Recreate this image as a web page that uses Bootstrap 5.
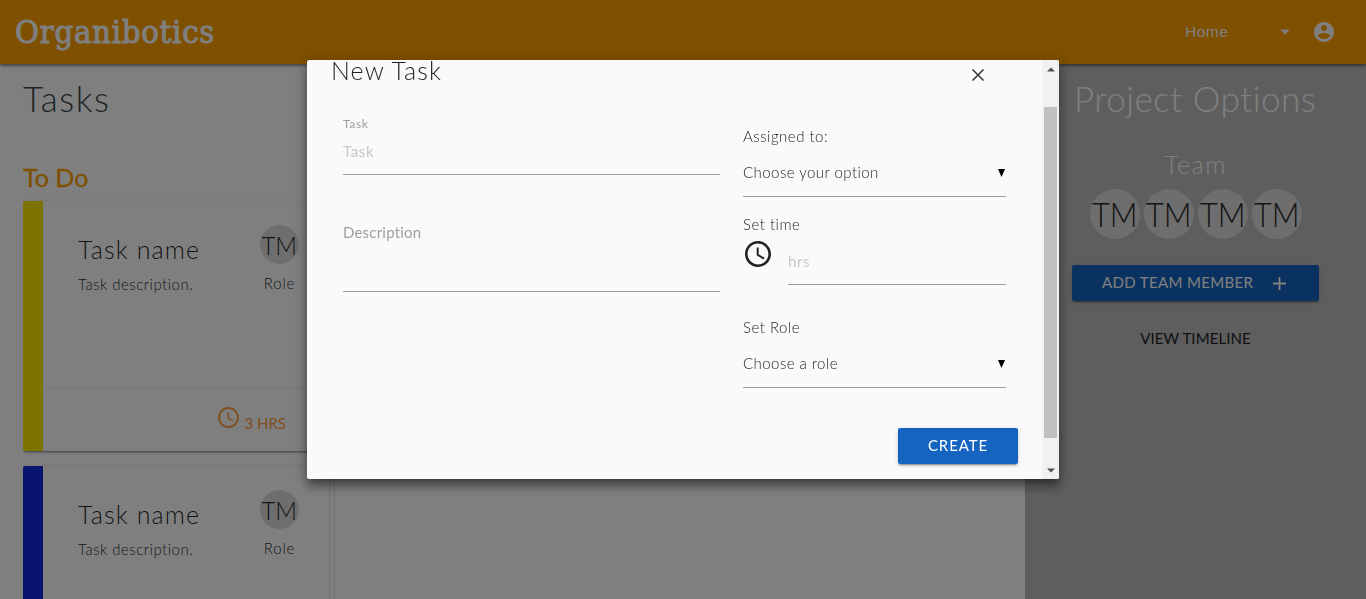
<!DOCTYPE html>
<html lang="en">
<head>
<meta charset="utf-8">
<title>Organibotics</title>
<meta name="viewport" content="width=device-width, initial-scale=1">
<link href="https://cdn.jsdelivr.net/npm/bootstrap@5.3.0/dist/css/bootstrap.min.css" rel="stylesheet">
<style>
body{font-family:Lato,"Open Sans",sans-serif;font-size:15px;font-weight:300;color:rgba(0,0,0,.87);height:100vh;overflow:hidden;background:#fff}
h1,h2,h3,p,label{margin:0;font-weight:300;white-space:nowrap}
.topbar{height:64px;background:#ffa000;box-shadow:0 2px 2px rgba(0,0,0,.3),0 1px 5px rgba(0,0,0,.25);position:relative;padding:0 30px 0 15px}
.brand{font:400 32.500px/64px "DejaVu Serif Condensed","DejaVu Serif",serif;font-stretch:condensed;color:#fff;letter-spacing:.75px;-webkit-text-stroke:1px #fff}
.home{font:15.5px/64px "Liberation Sans",sans-serif;color:#fff;width:94px;letter-spacing:.5px}
.account{margin-left:-3px}
.board{height:535px}
.tasks{width:1025px;padding-left:23px}
.page-title{font-size:35px;line-height:40px;padding-top:14px;letter-spacing:1.600px;color:#37474f}
.lane{width:312px;border-right:1px solid #e4e4e4;margin-top:44px;height:437px;overflow:hidden}
.lane-title{font-size:25px;line-height:30px;font-weight:400;color:#ffa000;letter-spacing:0;-webkit-text-stroke:.3px #ffa000}
.task{height:250px;margin:9px 5px 15px 0;background:#fff;border-radius:2px;box-shadow:0 2px 2px 0 rgba(0,0,0,.14),0 1px 5px 0 rgba(0,0,0,.12),0 3px 1px -2px rgba(0,0,0,.2);overflow:hidden}
.task-cut{height:134px;margin-bottom:0;border-radius:2px 2px 0 0}
.stripe{width:20px}
.yellow{background:#ffe600}.blue{background:#1028dc}
.task-main{height:187px;padding:24px 30px 0 35px}
.task-name{font-size:25px;line-height:30px;padding-top:9px;letter-spacing:1.150px}
.task-desc{line-height:22px;padding-top:9px;letter-spacing:.5px}
.who{width:39px}
.role{line-height:22px;padding-top:8px;letter-spacing:.8px}
.task-foot{border-top:1px solid #ededed;padding:18px 43px 0 0;height:63px;color:#ffa040}
.hours{line-height:20px;margin:6px 0 0 5px;font-weight:400}
.side{width:341px;background:#bdbdbd;color:#fff}
.side-title{font-size:35px;line-height:40px;padding:14px 0 0 49px;letter-spacing:.5px}
.team-title{font-size:25px;line-height:30px;margin-top:31px;letter-spacing:1.500px}
.team{gap:4px;margin-top:10px}
.blue-btn{background:#1565c0;color:#fff;border-radius:2px;height:36px;font-size:15px;font-weight:400;box-shadow:0 2px 2px rgba(0,0,0,.14),0 1px 5px rgba(0,0,0,.12),0 3px 1px -2px rgba(0,0,0,.2);white-space:nowrap;border:0;padding:0 0 2px}
.add{width:247px;margin:26px 0 0 47px;padding:0 33px 0 30px;letter-spacing:.35px}
.add span{padding-bottom:2px}
.create{width:120px;margin:40px 24px 0 auto;letter-spacing:.9px}
.timeline{font-weight:400;line-height:22px;margin:26px 0 0;letter-spacing:.1px;color:#212121}
.shade{--bs-backdrop-bg:#000;--bs-backdrop-opacity:.5}
.modal{overflow:hidden}
.modal-dialog{max-width:752px;margin:60px auto 0}
.modal-content{height:419px;background:#fafafa;border:0;border-radius:2px;flex-direction:row;overflow:hidden;box-shadow:0 8px 10px 1px rgba(0,0,0,.24),0 3px 14px 2px rgba(0,0,0,.22),0 5px 5px -3px rgba(0,0,0,.3);color:rgba(0,0,0,.87)}
.sheet{width:735px}
.sheet-head{height:41px}
.new-title{font-size:25px;line-height:20px;margin-left:24px;letter-spacing:1.100px}
.close-x{margin:9px 58px 0 0}
.left-col{width:377px;margin-left:36px}
.right-col{width:263px;margin-left:23px;padding-top:24px}
.small-label{font-size:12px;line-height:16px;padding-top:15px;height:29px;color:#9e9e9e;font-weight:400;letter-spacing:.6px}
.line-input{border:0;border-bottom:1px solid #9e9e9e;border-radius:0;background:none;padding:0 0 2px;font-size:15px;font-weight:300;height:45px;display:block;outline:0;width:100%;box-shadow:none;letter-spacing:.6px}
.line-input::placeholder{color:#c8c8c8;opacity:1;font-weight:400}
.desc{height:117px;border-bottom:1px solid #9e9e9e;color:#9e9e9e;line-height:22px;padding-top:46px;letter-spacing:.2px;font-weight:400}
.field-label{line-height:22px;letter-spacing:.5px}
.time-label{margin-top:16px}
.role-label{margin-top:31px}
.time-row{padding-top:5px}
.picker{height:50px;border-bottom:1px solid #9e9e9e;letter-spacing:.45px;padding-top:2px}
.clock-lg{margin:1px 17px 0 2px;flex:none}
.bar-v{width:17px;background:#f1f1f1;padding:7px 2px 6px}
.thumb{height:331px;background:#c1c1c1;width:13px;margin-top:35px}
</style>
</head>
<body>
<nav class="topbar d-flex align-items-center">
  <span class="brand me-auto">Organibotics</span>
  <span class="home">Home</span>
  <svg width="12" height="6" class="me-4" viewBox="0 0 12 6"><path d="M1 .5h10l-5 5z" fill="#fff"/></svg>
  <svg class="account" width="24" height="24" viewBox="0 0 24 24"><path fill="#fff" d="M12 2C6.480 2 2 6.480 2 12s4.480 10 10 10 10-4.480 10-10S17.520 2 12 2zm0 3c1.660 0 3 1.340 3 3s-1.340 3-3 3-3-1.340-3-3 1.340-3 3-3zm0 14.200c-2.500 0-4.710-1.280-6-3.220.030-1.990 4-3.080 6-3.080 1.990 0 5.970 1.090 6 3.080-1.290 1.940-3.500 3.220-6 3.220z"/></svg>
</nav>
<svg width="0" height="0" class="d-none"><defs>
  <symbol id="tm" viewBox="0 0 50 50"><circle cx="25" cy="25" r="25" fill="#dcdcdc"/><text x="2" y="38" font-family="Lato" font-weight="300" font-size="33.500" textLength="45.500" lengthAdjust="spacingAndGlyphs" fill="#2a2a2a">TM</text></symbol>
  <symbol id="clock" viewBox="2 2 20 20"><path fill="currentColor" d="M11.990 2C6.470 2 2 6.480 2 12s4.470 10 9.990 10C17.520 22 22 17.520 22 12S17.520 2 11.990 2zM12 20c-4.420 0-8-3.580-8-8s3.580-8 8-8 8 3.580 8 8-3.580 8-8 8zm.5-13H11v6l5.250 3.150.750-1.230-4.500-2.670z"/></symbol>
</defs></svg>
<div class="board d-flex">
  <main class="tasks">
    <h1 class="page-title">Tasks</h1>
    <section class="lane">
      <h2 class="lane-title">To Do</h2>
      <article class="task d-flex">
        <div class="stripe yellow"></div>
        <div class="flex-grow-1">
          <div class="task-main d-flex justify-content-between">
            <div><h3 class="task-name">Task name</h3><p class="task-desc">Task description.</p></div>
            <div class="who text-center"><svg class="d-block" width="39" height="39"><use href="#tm"/></svg><p class="role">Role</p></div>
          </div>
          <div class="task-foot d-flex justify-content-end"><svg width="21" height="21"><use href="#clock"/></svg><span class="hours">3 HRS</span></div>
        </div>
      </article>
      <article class="task task-cut d-flex">
        <div class="stripe blue"></div>
        <div class="flex-grow-1">
          <div class="task-main d-flex justify-content-between">
            <div><h3 class="task-name">Task name</h3><p class="task-desc">Task description.</p></div>
            <div class="who text-center"><svg class="d-block" width="39" height="39"><use href="#tm"/></svg><p class="role">Role</p></div>
          </div>
        </div>
      </article>
    </section>
  </main>
  <aside class="side">
    <h2 class="side-title">Project Options</h2>
    <h3 class="team-title text-center">Team</h3>
    <div class="team d-flex justify-content-center">
      <svg width="50" height="50"><use href="#tm"/></svg><svg width="50" height="50"><use href="#tm"/></svg><svg width="50" height="50"><use href="#tm"/></svg><svg width="50" height="50"><use href="#tm"/></svg>
    </div>
    <button class="blue-btn add d-flex align-items-center justify-content-between"><span>ADD TEAM MEMBER</span><svg width="13" height="13" viewBox="0 0 13 13"><path d="M6.500 0v13M0 6.500h13" stroke="#fff" stroke-width="1.800"/></svg></button>
    <p class="timeline text-center">VIEW TIMELINE</p>
  </aside>
</div>
<div class="modal-backdrop shade show"></div>
<div class="modal d-block" tabindex="-1">
  <div class="modal-dialog">
    <div class="modal-content">
      <div class="sheet">
        <div class="sheet-head d-flex justify-content-between"><h2 class="new-title">New Task</h2><svg class="close-x" width="12" height="12" viewBox="0 0 12 12"><path d="M.5.5l11 11M11.500.5l-11 11" stroke="#333" stroke-width="1.500"/></svg></div>
        <div class="d-flex">
          <div class="left-col">
            <label class="small-label d-block" for="t">Task</label>
            <input id="t" class="line-input" placeholder="Task">
            <div class="desc">Description</div>
          </div>
          <div class="right-col">
            <p class="field-label">Assigned to:</p>
            <div class="picker d-flex justify-content-between align-items-center">Choose your option<svg width="9" height="8"><path d="M1 0h7L4.500 8z"/></svg></div>
            <p class="field-label time-label">Set time</p>
            <div class="d-flex time-row"><svg class="clock-lg" width="26" height="26"><use href="#clock"/></svg><input class="line-input" placeholder="hrs"></div>
            <p class="field-label role-label">Set Role</p>
            <div class="picker d-flex justify-content-between align-items-center">Choose a role<svg width="9" height="8"><path d="M1 0h7L4.500 8z"/></svg></div>
          </div>
        </div>
        <button class="blue-btn create d-block">CREATE</button>
      </div>
      <div class="bar-v d-flex flex-column align-items-center">
        <svg width="8" height="5"><path d="M0 4.500L4 .5l4 4z" fill="#505050"/></svg>
        <div class="thumb"></div>
        <svg class="mt-auto" width="8" height="5"><path d="M0 .5l4 4 4-4z" fill="#505050"/></svg>
      </div>
    </div>
  </div>
</div>
<script src="https://cdn.jsdelivr.net/npm/bootstrap@5.3.0/dist/js/bootstrap.bundle.min.js"></script>
</body>
</html>
